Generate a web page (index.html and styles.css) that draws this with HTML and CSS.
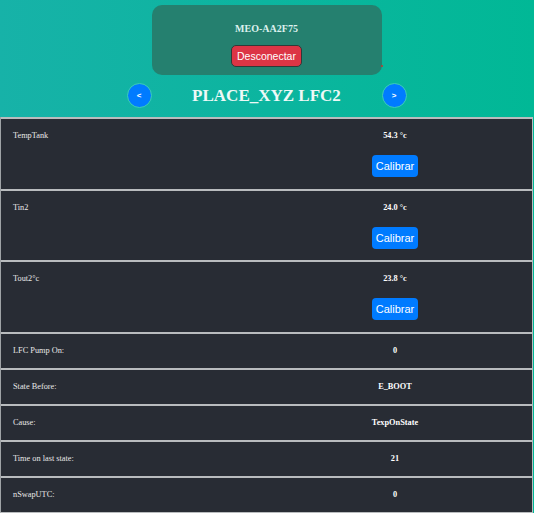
FILE: index.html
```html
<!DOCTYPE html>
<html>
<head>
<meta charset="utf-8">
<link rel="stylesheet" href="styles.css">
</head>
<body>
<div class="page">
  <div class="card">
    <div class="device">MEO-AA2F75</div>
    <button class="btn-disconnect">Desconectar</button>
    <span class="dot"></span>
  </div>
  <div class="nav">
    <button class="circle">&lt;</button>
    <h1 class="title">PLACE_XYZ LFC2</h1>
    <button class="circle">&gt;</button>
  </div>
  <div class="table">
    <div class="row tall"><div class="label">TempTank</div><div class="value"><div class="val">54.3 °c</div><button class="btn-cal">Calibrar</button></div></div>
    <div class="row tall"><div class="label">Tin2</div><div class="value"><div class="val">24.0 °c</div><button class="btn-cal">Calibrar</button></div></div>
    <div class="row tall"><div class="label">Tout2°c</div><div class="value"><div class="val">23.8 °c</div><button class="btn-cal">Calibrar</button></div></div>
    <div class="row"><div class="label">LFC Pump On:</div><div class="value"><div class="val">0</div></div></div>
    <div class="row"><div class="label">State Before:</div><div class="value"><div class="val">E_BOOT</div></div></div>
    <div class="row"><div class="label">Cause:</div><div class="value"><div class="val">TexpOnState</div></div></div>
    <div class="row"><div class="label">Time on last state:</div><div class="value"><div class="val">21</div></div></div>
    <div class="row"><div class="label">nSwapUTC:</div><div class="value"><div class="val">0</div></div></div>
  </div>
</div>
</body>
</html>
```
FILE: styles.css
```css
html, body {
  margin: 0;
  padding: 0;
}
body {
  background: linear-gradient(to right, #17b2a8, #01b896);
  font-family: "Liberation Serif", "Times New Roman", serif;
  min-height: 513px;
  overflow: hidden;
}
.page {
  width: 533px;
  padding-top: 5px;
}
.card {
  position: relative;
  width: 230px;
  height: 70px;
  margin: 0 auto;
  box-sizing: border-box;
  padding-top: 18px;
  background: #25806f;
  border-radius: 10px;
  display: flex;
  flex-direction: column;
  align-items: center;
}
.device {
  font-size: 10px;
  line-height: 12px;
  font-weight: bold;
  color: #dcf1ee;
}
.btn-disconnect {
  margin-top: 10px;
  height: 22px;
  padding: 0 5px;
  background: #dc3545;
  border: 1px solid #2f3a38;
  border-radius: 5px;
  color: #fff;
  font-family: "Liberation Sans", Arial, sans-serif;
  font-size: 10.5px;
  line-height: 20px;
}
.dot {
  position: absolute;
  right: -1px;
  bottom: 8px;
  width: 2px;
  height: 2px;
  background: #c0392b;
  border-radius: 50%;
}
.nav {
  margin-top: 8px;
  height: 25px;
  display: flex;
  justify-content: center;
  align-items: center;
}
.circle {
  width: 25px;
  height: 25px;
  padding: 0;
  border-radius: 50%;
  background: #007bff;
  border: 1px solid #3ccfb3;
  color: #fff;
  font-family: "Liberation Sans", Arial, sans-serif;
  font-weight: bold;
  font-size: 8px;
  line-height: 23px;
  text-align: center;
}
.title {
  width: 230px;
  margin: 0;
  text-align: center;
  font-size: 17px;
  line-height: 25px;
  font-weight: bold;
  color: #eef9f7;
}
.table {
  margin-top: 9px;
  width: 533px;
  box-sizing: border-box;
  background: #282c34;
  border-left: 1px solid #9fa3a6;
  border-right: 1px solid #b9bcbe;
  border-bottom: 1px solid #b9bcbe;
}
.row {
  display: grid;
  grid-template-columns: 257px 1fr;
  height: 36px;
  box-sizing: border-box;
  border-top: 2px solid #b9bcbe;
  padding-top: 12px;
  font-size: 8.3px;
  line-height: 10px;
}
.row.tall {
  height: 72px;
}
.row:nth-child(2) {
  height: 71px;
}
.label {
  padding-left: 12px;
  color: #e8e8e8;
}
.value {
  display: flex;
  flex-direction: column;
  align-items: center;
  color: #ffffff;
  font-weight: bold;
}
.btn-cal {
  margin-top: 14px;
  width: 46px;
  height: 22px;
  padding: 0;
  background: #007bff;
  border: none;
  border-radius: 4px;
  color: #fff;
  font-family: "Liberation Sans", Arial, sans-serif;
  font-size: 11px;
  line-height: 22px;
}
```
